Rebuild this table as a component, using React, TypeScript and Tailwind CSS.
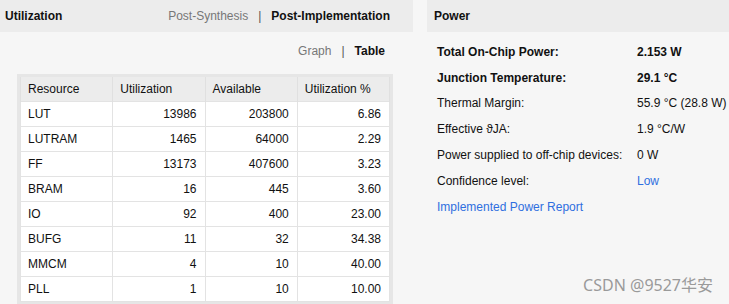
const rows = [
  ["LUT", "13986", "203800", "6.86"],
  ["LUTRAM", "1465", "64000", "2.29"],
  ["FF", "13173", "407600", "3.23"],
  ["BRAM", "16", "445", "3.60"],
  ["IO", "92", "400", "23.00"],
  ["BUFG", "11", "32", "34.38"],
  ["MMCM", "4", "10", "40.00"],
  ["PLL", "1", "10", "10.00"],
];

const power = [
  { label: "Total On-Chip Power:", value: "2.153 W", bold: true },
  { label: "Junction Temperature:", value: "29.1 °C", bold: true },
  { label: "Thermal Margin:", value: "55.9 °C (28.8 W)" },
  { label: "Effective ϑJA:", value: "1.9 °C/W" },
  { label: "Power supplied to off-chip devices:", value: "0 W" },
  { label: "Confidence level:", value: "Low", link: true },
];

export default function App() {
  return (
    <div className="flex h-[304px] w-[729px] overflow-hidden bg-[#f6f6f6] font-['Liberation_Sans',Arial,sans-serif] text-[12px] text-[#111]">
      {/* utilization */}
      <div className="flex w-[413px] flex-col">
        <div className="flex h-[32px] shrink-0 items-center justify-between bg-[#ececec] pl-[5px] pr-[23px]">
          <span className="font-bold">Utilization</span>
          <div className="flex items-center">
            <span className="text-[#777]">Post-Synthesis</span>
            <span className="mx-[10px] text-[#555]">|</span>
            <span className="font-bold">Post-Implementation</span>
          </div>
        </div>
        <div className="flex h-[42px] shrink-0 items-center justify-end pb-[4px] pr-[28px]">
          <span className="text-[#777]">Graph</span>
          <span className="mx-[10px] text-[#555]">|</span>
          <span className="font-bold">Table</span>
        </div>
        <div className="ml-[17px] w-[376px] shrink-0 bg-[#e6e6e6] p-[3px] pb-[4px]">
          <table className="w-full table-fixed border-collapse">
            <thead>
              <tr className="h-[24px] bg-[#ececec]">
                {["Resource", "Utilization", "Available", "Utilization %"].map((h) => (
                  <th key={h} className="border-x border-[#e0e0e0] px-[7px] text-left font-normal">
                    {h}
                  </th>
                ))}
              </tr>
            </thead>
            <tbody>
              {rows.map((r) => (
                <tr key={r[0]} className="h-[25px] bg-white">
                  {r.map((c, i) => (
                    <td
                      key={i}
                      className={`border border-[#e3e3e3] px-[7px] ${i === 0 ? "text-left" : "pr-[8px] text-right"}`}
                    >
                      {c}
                    </td>
                  ))}
                </tr>
              ))}
            </tbody>
          </table>
        </div>
      </div>

      {/* power */}
      <div className="relative ml-[14px] flex flex-1 flex-col">
        <div className="flex h-[32px] items-center bg-[#ececec] pl-[7px]">
          <span className="font-bold">Power</span>
        </div>
        <div className="flex flex-col pl-[10px] pt-[7px]">
          {power.map((p) => (
            <div key={p.label} className="flex h-[25.8px] items-center">
              <span className={`w-[200px] ${p.bold ? "font-bold" : ""}`}>{p.label}</span>
              <span className={`${p.bold ? "font-bold" : ""} ${p.link ? "text-[#2f6fe0]" : ""}`}>{p.value}</span>
            </div>
          ))}
          <div className="flex h-[25.8px] items-center">
            <span className="text-[#2f6fe0]">Implemented Power Report</span>
          </div>
        </div>
        <span className="absolute bottom-[7px] right-[16px] font-['Noto_Sans','Noto_Sans_CJK_SC',sans-serif] text-[16px] text-[#9a9a9a]">
          CSDN @9527华安
        </span>
      </div>
    </div>
  );
}
